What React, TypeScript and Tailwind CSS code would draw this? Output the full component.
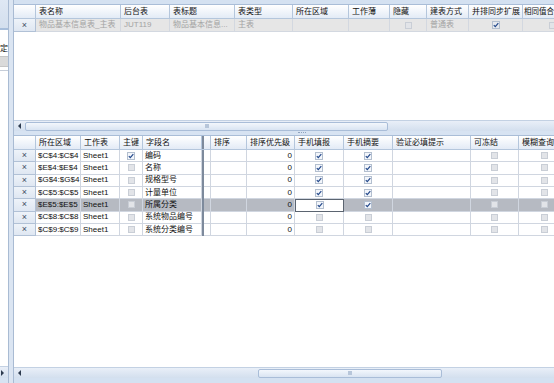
import React from 'react';

const FONT = "font-['Liberation_Sans','Noto_Sans_CJK_SC',sans-serif]";

type Box = 'on' | 'off' | 'onGray';

function Check({ kind }: { kind: Box }) {
    if (kind === 'off') {
        return (
            <span className="block w-[7px] h-[7px] border border-[#c9ced6] bg-[#e2e4e8]" />
        );
    }
    return (
        <svg width="8" height="8" viewBox="0 0 8 8" className="block">
            <rect x="0.5" y="0.5" width="7" height="7" fill={kind === 'on' ? '#f3f6fb' : '#e6e9ee'} stroke="#b3bfcf" />
            <path d="M1.8 4.1 L3.3 5.7 L6.3 2.1" fill="none" stroke="#23488a" strokeWidth="1.2" />
        </svg>
    );
}

function ScrollBar({ thumbLeft, thumbWidth }: { thumbLeft: number; thumbWidth: number }) {
    return (
        <div className="h-[11px] flex items-center bg-gradient-to-b from-[#e9eff8] to-[#d3dfee] border-t border-[#c3d1e3]">
            <div className="w-[11px] flex justify-center items-center">
                <span className="block w-0 h-0 border-y-[3px] border-y-transparent border-r-[3px] border-r-[#2d3b4f]" />
            </div>
            <div className="shrink-0" style={{ width: thumbLeft }} />
            <div
                className="h-[9px] rounded-[2px] border border-[#a9bdd8] bg-gradient-to-b from-[#f3f7fc] to-[#d9e4f2] flex items-center justify-center"
                style={{ width: thumbWidth }}
            >
                <span className="block w-[4px] h-[4px] bg-[#b7c6da]" />
            </div>
        </div>
    );
}

const topHead = ['', '表名称', '后台表', '表标题', '表类型', '所在区域', '工作薄', '隐藏', '建表方式', '并排同步扩展'];
const topWidths = ['w-[22px]', 'w-[85px]', 'w-[49px]', 'w-[65px]', 'w-[58px]', 'w-[56px]', 'w-[41px]', 'w-[37px]', 'w-[42px]', 'w-[54px]', 'w-[60px]'];

const botWidths = ['w-[22px]', 'w-[45px]', 'w-[39px]', 'w-[23px]', 'w-[59px]', 'w-[2px]', 'w-[7px]', 'w-[36px]', 'w-[48px]', 'w-[49px]', 'w-[49px]', 'w-[78px]', 'w-[48px]', 'w-[52px]'];
const botHead = ['', '所在区域', '工作表', '主键', '字段名', '', '', '排序', '排序优先级', '手机填报', '手机摘要', '验证必填提示', '可冻结', '模糊查询'];

const rows = [
    { area: '$C$4:$C$4', name: '编码', key: true, mobile: true },
    { area: '$E$4:$E$4', name: '名称', key: false, mobile: true },
    { area: '$G$4:$G$4', name: '规格型号', key: false, mobile: true },
    { area: '$C$5:$C$5', name: '计量单位', key: false, mobile: true },
    { area: '$E$5:$E$5', name: '所属分类', key: false, mobile: true, selected: true },
    { area: '$C$8:$C$8', name: '系统物品编号', key: false, mobile: false },
    { area: '$C$9:$C$9', name: '系统分类编号', key: false, mobile: false },
];

function HeadCell({ w, children }: { w: string; children?: React.ReactNode }) {
    return (
        <div className={`${w} shrink-0 h-full border-r border-[#b4c6dc] px-[3px] flex items-center whitespace-nowrap overflow-hidden`}>
            {children}
        </div>
    );
}

function XCell() {
    return (
        <div className="w-[22px] shrink-0 h-full border-r border-b border-[#b1c1d6] bg-gradient-to-b from-[#eef3f9] to-[#dfe7f2] flex items-center justify-center text-[9px] text-[#3c4c63]">
            ×
        </div>
    );
}

export default function App() {
    return (
        <div className={`w-[554px] h-[383px] flex overflow-hidden bg-[#d7e3f2] text-[8px] leading-none text-[#111] ${FONT}`}>
            {/* left collapsed panel */}
            <div className="w-[9px] shrink-0 flex flex-col border-r border-[#a9bbd3]">
                <div className="h-[30px] bg-gradient-to-b from-[#dfe8f4] to-[#d3dfee] border-b-2 border-[#a7bedb]" />
                <div className="h-[26px] bg-white flex items-end justify-end pb-[3px] overflow-hidden">
                    <span className="text-[8px]">定</span>
                </div>
                <div className="h-[11px] bg-[#dadada] border-y border-[#c6c6c6]" />
                <div className="h-[4px] bg-white border-b border-[#c6cdd8]" />
                <div className="flex-1 bg-white" />
                <div className="h-[12px] flex items-center bg-gradient-to-b from-[#e9eff8] to-[#d3dfee] border-t border-[#c3d1e3]">
                    <span className="block ml-[1px] w-0 h-0 border-y-[3px] border-y-transparent border-l-[3px] border-l-[#2d3b4f]" />
                </div>
                <div className="h-[5px]" />
            </div>

            {/* splitter */}
            <div className="w-[4px] shrink-0 bg-[#dbe5f2]" />

            {/* main */}
            <div className="flex-1 min-w-0 flex flex-col border-l border-[#a9bbd3] overflow-hidden">
                <div className="h-[4px] shrink-0 bg-[#d4e1f1]" />

                {/* top grid */}
                <div className="h-[127px] shrink-0 flex flex-col bg-white border-t border-[#a9bdd7]">
                    <div className="h-[14px] shrink-0 flex bg-gradient-to-b from-[#ffffff] to-[#e3ebf6] border-b border-[#b4c6dc]">
                        {topHead.map((t, i) => (
                            <HeadCell key={i} w={topWidths[i]}>{t}</HeadCell>
                        ))}
                        <div className="w-[60px] shrink-0 h-full pl-[1px] flex items-center whitespace-nowrap text-[7.5px]">相同值合</div>
                    </div>
                    <div className="h-[13px] shrink-0 flex bg-[#e6e6e6] text-[#a3a3a3]">
                        <XCell />
                        {['物品基本信息表_主表', 'JUT119', '物品基本信息...', '主表', '', '', 'hide', '普通表', 'sync', 'same'].map((t, i) => (
                            <div
                                key={i}
                                className={`${topWidths[i + 1]} shrink-0 h-full border-r border-b border-[#d3d8e0] px-[3px] flex items-center whitespace-nowrap overflow-hidden ${t === 'hide' || t === 'sync' || t === 'same' ? 'justify-center' : ''}`}
                            >
                                {t === 'hide' || t === 'same' ? <Check kind="off" /> : t === 'sync' ? <Check kind="onGray" /> : t}
                            </div>
                        ))}
                    </div>
                    <div className="flex-1" />
                    <ScrollBar thumbLeft={0} thumbWidth={363} />
                </div>

                {/* horizontal splitter */}
                <div className="h-[4px] shrink-0 bg-[#d7e3f2] flex justify-center pl-[36px]">
                    <span className="block mt-[1px] w-[8px] h-[1px] border-t border-dotted border-[#8ea3bf]" />
                </div>

                {/* bottom grid */}
                <div className="flex-1 flex flex-col bg-white border-t border-[#a9bdd7]">
                    <div className="h-[14px] shrink-0 flex bg-gradient-to-b from-[#ffffff] to-[#e3ebf6] border-b border-[#b4c6dc]">
                        {botHead.map((t, i) =>
                            i === 5 ? (
                                <div key={i} className="w-[2px] shrink-0 h-full bg-[#7d8a9c]" />
                            ) : (
                                <HeadCell key={i} w={botWidths[i]}>{t}</HeadCell>
                            )
                        )}
                    </div>
                    {rows.map((r, ri) => (
                        <div key={ri} className={`h-[12.33px] shrink-0 flex ${r.selected ? 'bg-[#b6bac2]' : 'bg-white'}`}>
                            <XCell />
                            <div className={`${botWidths[1]} shrink-0 h-full border-r border-b border-[#d0d6e0] px-[2px] flex items-center whitespace-nowrap overflow-hidden`}>{r.area}</div>
                            <div className={`${botWidths[2]} shrink-0 h-full border-r border-b border-[#d0d6e0] px-[2px] flex items-center`}>Sheet1</div>
                            <div className={`${botWidths[3]} shrink-0 h-full border-r border-b border-[#d0d6e0] flex items-center justify-center`}>
                                <Check kind={r.key ? 'on' : 'off'} />
                            </div>
                            <div className={`${botWidths[4]} shrink-0 h-full border-r border-b border-[#d0d6e0] px-[2px] flex items-center whitespace-nowrap`}>{r.name}</div>
                            <div className="w-[2px] shrink-0 h-full bg-[#7d8a9c]" />
                            <div className={`${botWidths[6]} shrink-0 h-full border-r border-b border-[#d0d6e0]`} />
                            <div className={`${botWidths[7]} shrink-0 h-full border-r border-b border-[#d0d6e0]`} />
                            <div className={`${botWidths[8]} shrink-0 h-full border-r border-b border-[#d0d6e0] px-[2px] flex items-center justify-end`}>0</div>
                            <div
                                className={`${botWidths[9]} shrink-0 h-full border-r border-b flex items-center justify-center ${r.selected ? 'bg-white border border-[#5b6470]' : 'border-[#d0d6e0]'}`}
                            >
                                <Check kind={r.mobile ? 'on' : 'off'} />
                            </div>
                            <div className={`${botWidths[10]} shrink-0 h-full border-r border-b border-[#d0d6e0] flex items-center justify-center`}>
                                <Check kind={r.mobile ? 'on' : 'off'} />
                            </div>
                            <div className={`${botWidths[11]} shrink-0 h-full border-r border-b border-[#d0d6e0]`} />
                            <div className={`${botWidths[12]} shrink-0 h-full border-r border-b border-[#d0d6e0] flex items-center justify-center`}>
                                <Check kind="off" />
                            </div>
                            <div className={`${botWidths[13]} shrink-0 h-full border-r border-b border-[#d0d6e0] flex items-center justify-center`}>
                                <Check kind="off" />
                            </div>
                        </div>
                    ))}
                    <div className="flex-1" />
                    <ScrollBar thumbLeft={233} thumbWidth={184} />
                </div>

                <div className="h-[5px] shrink-0 bg-[#d4e1f1]" />
            </div>
        </div>
    );
}
